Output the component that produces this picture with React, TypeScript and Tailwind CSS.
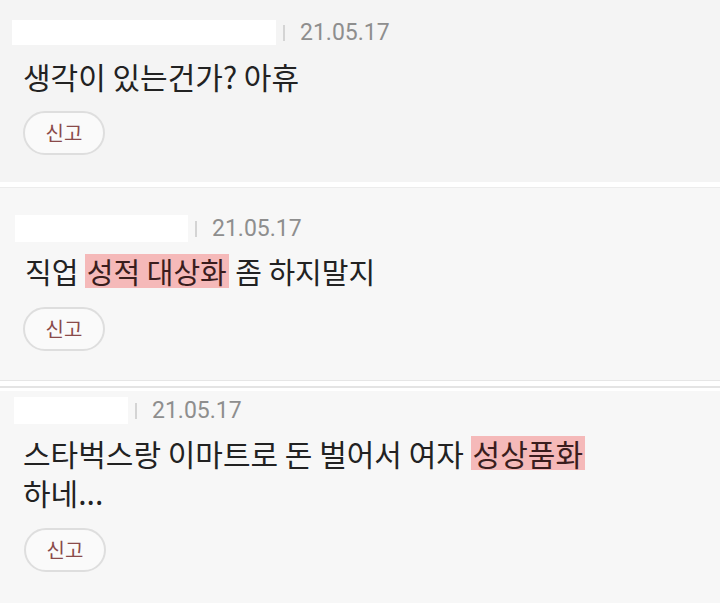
import React from "react";

const KR = "font-['Noto_Sans_CJK_KR','Noto_Sans',sans-serif]";

function Header({ boxLeft, boxWidth, boxHeight }: { boxLeft: string; boxWidth: string; boxHeight: string }) {
  return (
    <div className="flex items-center">
      <div className={`${boxLeft} ${boxWidth} ${boxHeight} bg-white`} />
      <div className="ml-[7px] w-[2px] h-[16px] bg-[#d4d4d4]" />
      <span className="ml-[15px] font-['Roboto','Liberation_Sans',sans-serif] text-[23px] leading-none text-[#8e8e8e]">
        21.05.17
      </span>
    </div>
  );
}

function ReportButton({ left }: { left: string }) {
  return (
    <button
      className={`${left} w-[82px] h-[44px] rounded-full border-2 border-[#dedede] bg-[#fafafa] flex items-center justify-center ${KR} text-[20px] text-[#8a4a4a]`}
    >
      신고
    </button>
  );
}

function Mark({ children }: { children: React.ReactNode }) {
  return (
    <span className="inline-block leading-[34px] px-[2px] bg-[#f5b9b9] text-[#3a1d1d]">{children}</span>
  );
}

export default function App() {
  return (
    <div className={`w-[720px] h-[603px] overflow-hidden bg-[#f7f7f7] ${KR} text-[#222]`}>
      {/* comment 1 */}
      <div className="h-[182px] bg-[#f4f4f4] pt-[20px] flex flex-col">
        <Header boxLeft="ml-[12px]" boxWidth="w-[264px]" boxHeight="h-[25px]" />
        <p className="mt-[12px] ml-[23px] text-[30px] leading-[38px]">생각이 있는건가? 아휴</p>
        <div className="mt-[16px]">
          <ReportButton left="ml-[23px]" />
        </div>
      </div>
      <div className="h-[5px] bg-white" />
      <div className="h-px bg-[#ececec]" />

      {/* comment 2 */}
      <div className="h-[192px] bg-[#f7f7f7] pt-[27px] flex flex-col">
        <Header boxLeft="ml-[15px]" boxWidth="w-[173px]" boxHeight="h-[27px]" />
        <p className="mt-[10px] ml-[25px] text-[29px] leading-[38px]">
          직업 <Mark>성적 대상화</Mark> 좀 하지말지
        </p>
        <div className="mt-[17px]">
          <ReportButton left="ml-[23px]" />
        </div>
      </div>
      <div className="h-px bg-[#e6e6e6]" />
      <div className="h-[5px] bg-white" />
      <div className="h-[2px] bg-[#e4e4e4]" />
      <div className="h-[3px] bg-white" />

      {/* comment 3 */}
      <div className="bg-[#f7f7f7] pt-[6px] flex flex-col">
        <Header boxLeft="ml-[14px]" boxWidth="w-[114px]" boxHeight="h-[27px]" />
        <p className="mt-[10px] ml-[23px] w-[610px] break-keep text-[30px] leading-[39px]">
          스타벅스랑 이마트로 돈 벌어서 여자 <Mark>성상품화</Mark> 하네...
        </p>
        <div className="mt-[16px]">
          <ReportButton left="ml-[24px]" />
        </div>
      </div>
    </div>
  );
}
